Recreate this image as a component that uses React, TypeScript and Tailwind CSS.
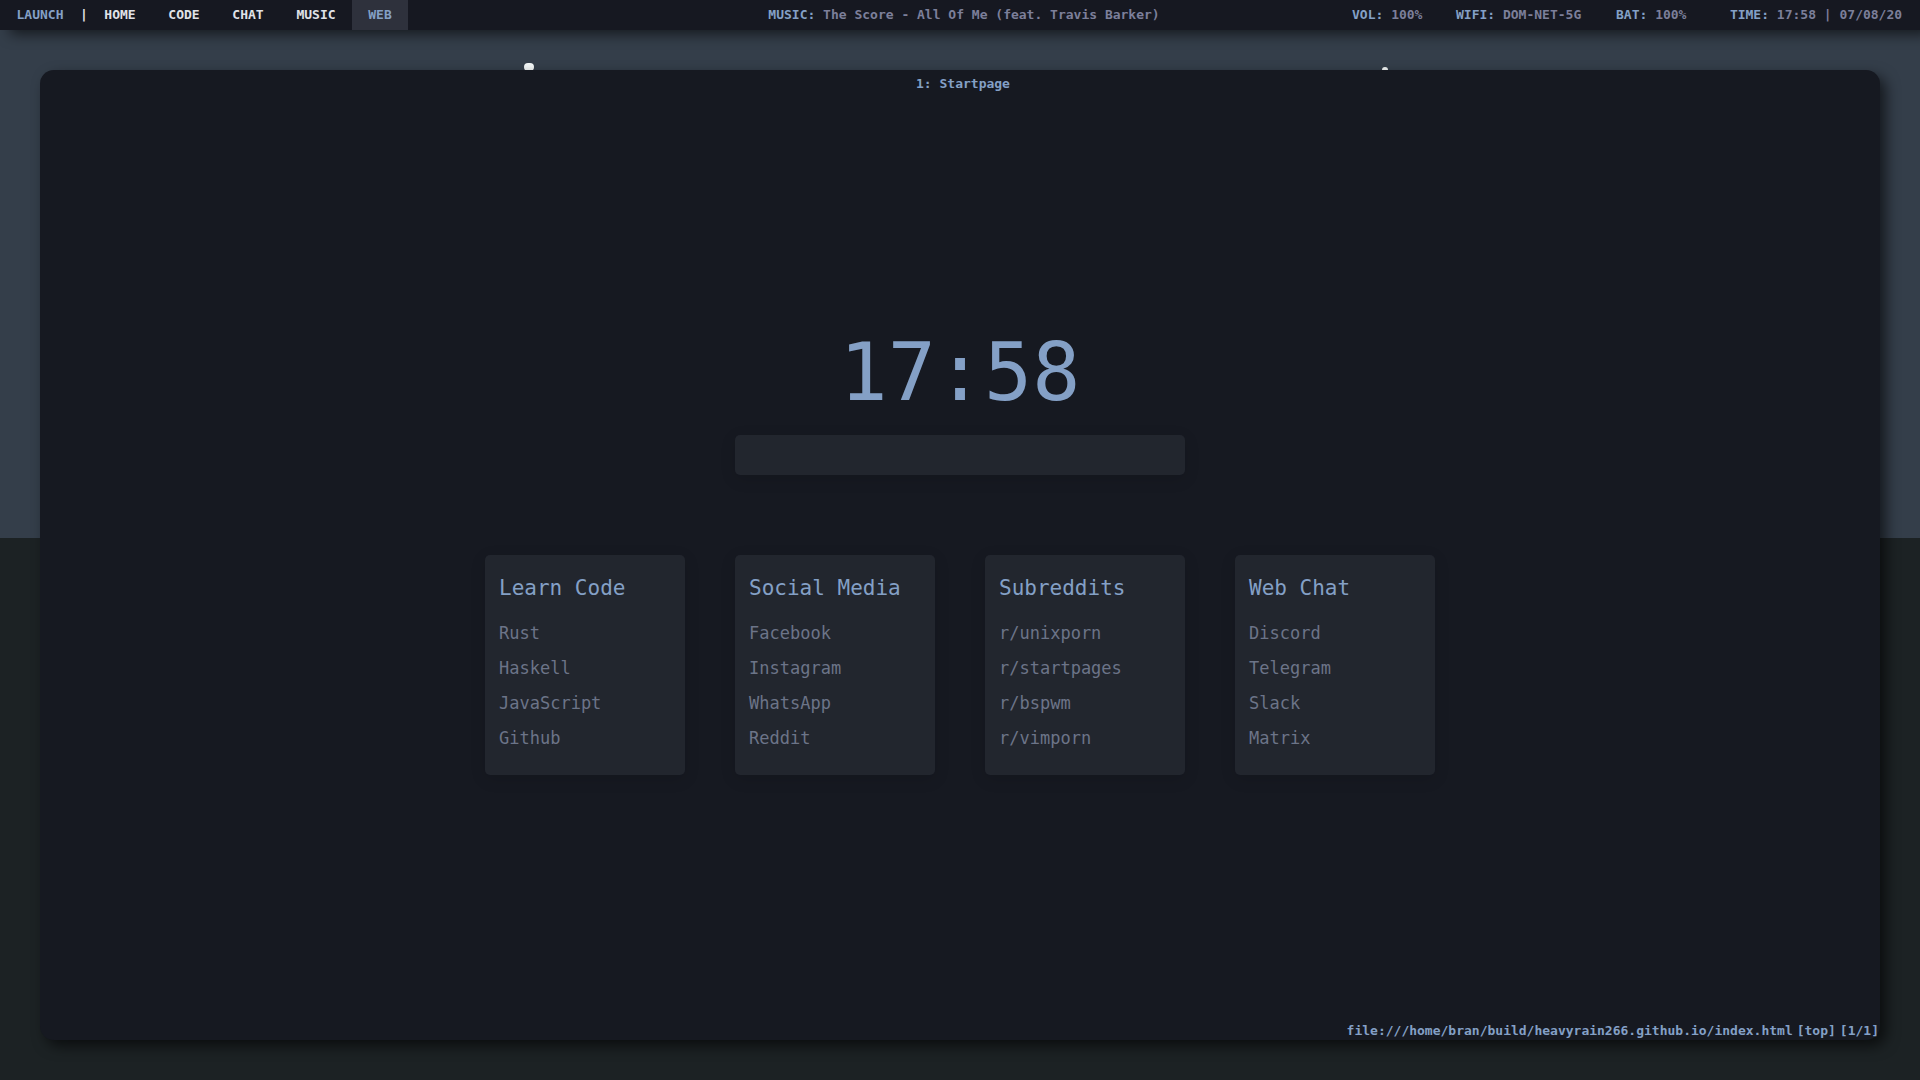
const workspaces = [
  { name: "HOME", width: "w-16" },
  { name: "CODE", width: "w-16" },
  { name: "CHAT", width: "w-16" },
  { name: "MUSIC", width: "w-18" },
];

const cards = [
  { title: "Learn Code", links: ["Rust", "Haskell", "JavaScript", "Github"] },
  { title: "Social Media", links: ["Facebook", "Instagram", "WhatsApp", "Reddit"] },
  { title: "Subreddits", links: ["r/unixporn", "r/startpages", "r/bspwm", "r/vimporn"] },
  { title: "Web Chat", links: ["Discord", "Telegram", "Slack", "Matrix"] },
];

function Status({ label, value, width }: { label: string; value: string; width: string }) {
  return (
    <span className={width}>
      <span className="text-[#84a0c6]">{label}:</span> {value}
    </span>
  );
}

function Bar() {
  return (
    <header className="relative z-10 grid h-[30px] grid-cols-[1fr_auto_1fr] items-center whitespace-nowrap bg-[#161821] text-[13px] leading-[30px] font-bold text-[#7c7f9a] shadow-[10px_4px_14px_rgba(0,0,0,0.6)]">
      <nav className="flex h-[30px] text-[#e0e2e8]">
        <button className="w-20 text-[#84a0c6]">LAUNCH</button>
        <span className="w-2 text-center">|</span>
        {workspaces.map((w) => (
          <button key={w.name} className={w.width}>
            {w.name}
          </button>
        ))}
        <button className="w-14 bg-[#2e313c] text-[#84a0c6]">WEB</button>
      </nav>
      <p className="h-[30px] pl-2">
        <span className="text-[#84a0c6]">MUSIC:</span> The Score - All Of Me (feat. Travis Barker)
      </p>
      <div className="flex h-[30px] justify-end gap-8 pr-4">
        <Status label="VOL" value="100%" width="w-18" />
        <Status label="WIFI" value="DOM-NET-5G" width="w-32" />
        <Status label="BAT" value="100%" width="w-20" />
        <Status label="TIME" value="17:58 | 07/08/20" width="w-44 text-center" />
      </div>
    </header>
  );
}

function Card({ title, links }: { title: string; links: string[] }) {
  return (
    <section className="w-[200px] rounded-[5px] bg-[#22262e] px-[14px] py-4 shadow-[0_4px_16px_rgba(0,0,0,0.12)]">
      <h2 className="mb-2.5 text-[21px] leading-[35px] whitespace-nowrap text-[#84a0c6]">{title}</h2>
      <ul className="mb-[3px] text-[17px] leading-[35px] text-[#6c7488]">
        {links.map((link) => (
          <li key={link}>
            <a href="#">{link}</a>
          </li>
        ))}
      </ul>
    </section>
  );
}

export default function App() {
  return (
    <div className="relative flex min-h-screen flex-col overflow-hidden bg-[linear-gradient(#343e4a_49.8%,#1c2224_49.8%)] font-['DejaVu_Sans_Mono',monospace]">
      <div className="absolute top-[63px] left-[524px] h-2 w-2.5 rounded-full bg-[#f4f8f8]" />
      <div className="absolute top-[67px] left-[1382px] h-1.5 w-1.5 rounded-full bg-[#f4f8f8]" />
      <Bar />
      <main className="relative m-10 flex flex-1 flex-col rounded-[14px] bg-[#161921] shadow-[6px_6px_14px_rgba(0,0,0,0.6)]">
        <h1 className="h-7 pl-1.5 text-center text-[13px] leading-7 font-bold text-[#84a0c6]">1: Startpage</h1>
        <div className="flex flex-1 flex-col items-center justify-center">
          <time className="mb-6 text-[80px] leading-[76px] text-[#84a0c6]">17:58</time>
          <input
            aria-label="Search"
            className="mb-20 h-10 w-[450px] rounded-[5px] bg-[#22262e] px-4 text-[17px] text-[#84a0c6] shadow-[0_4px_16px_rgba(0,0,0,0.12)] outline-none"
          />
          <div className="flex flex-wrap justify-center gap-[50px]">
            {cards.map((card) => (
              <Card key={card.title} {...card} />
            ))}
          </div>
        </div>
        <footer className="flex h-7 items-end justify-end gap-1 pr-px text-[13px] leading-[18px] font-bold text-[#84a0c6]">
          <span>file:///home/bran/build/heavyrain266.github.io/index.html</span>
          <span>[top]</span>
          <span>[1/1]</span>
        </footer>
      </main>
    </div>
  );
}
